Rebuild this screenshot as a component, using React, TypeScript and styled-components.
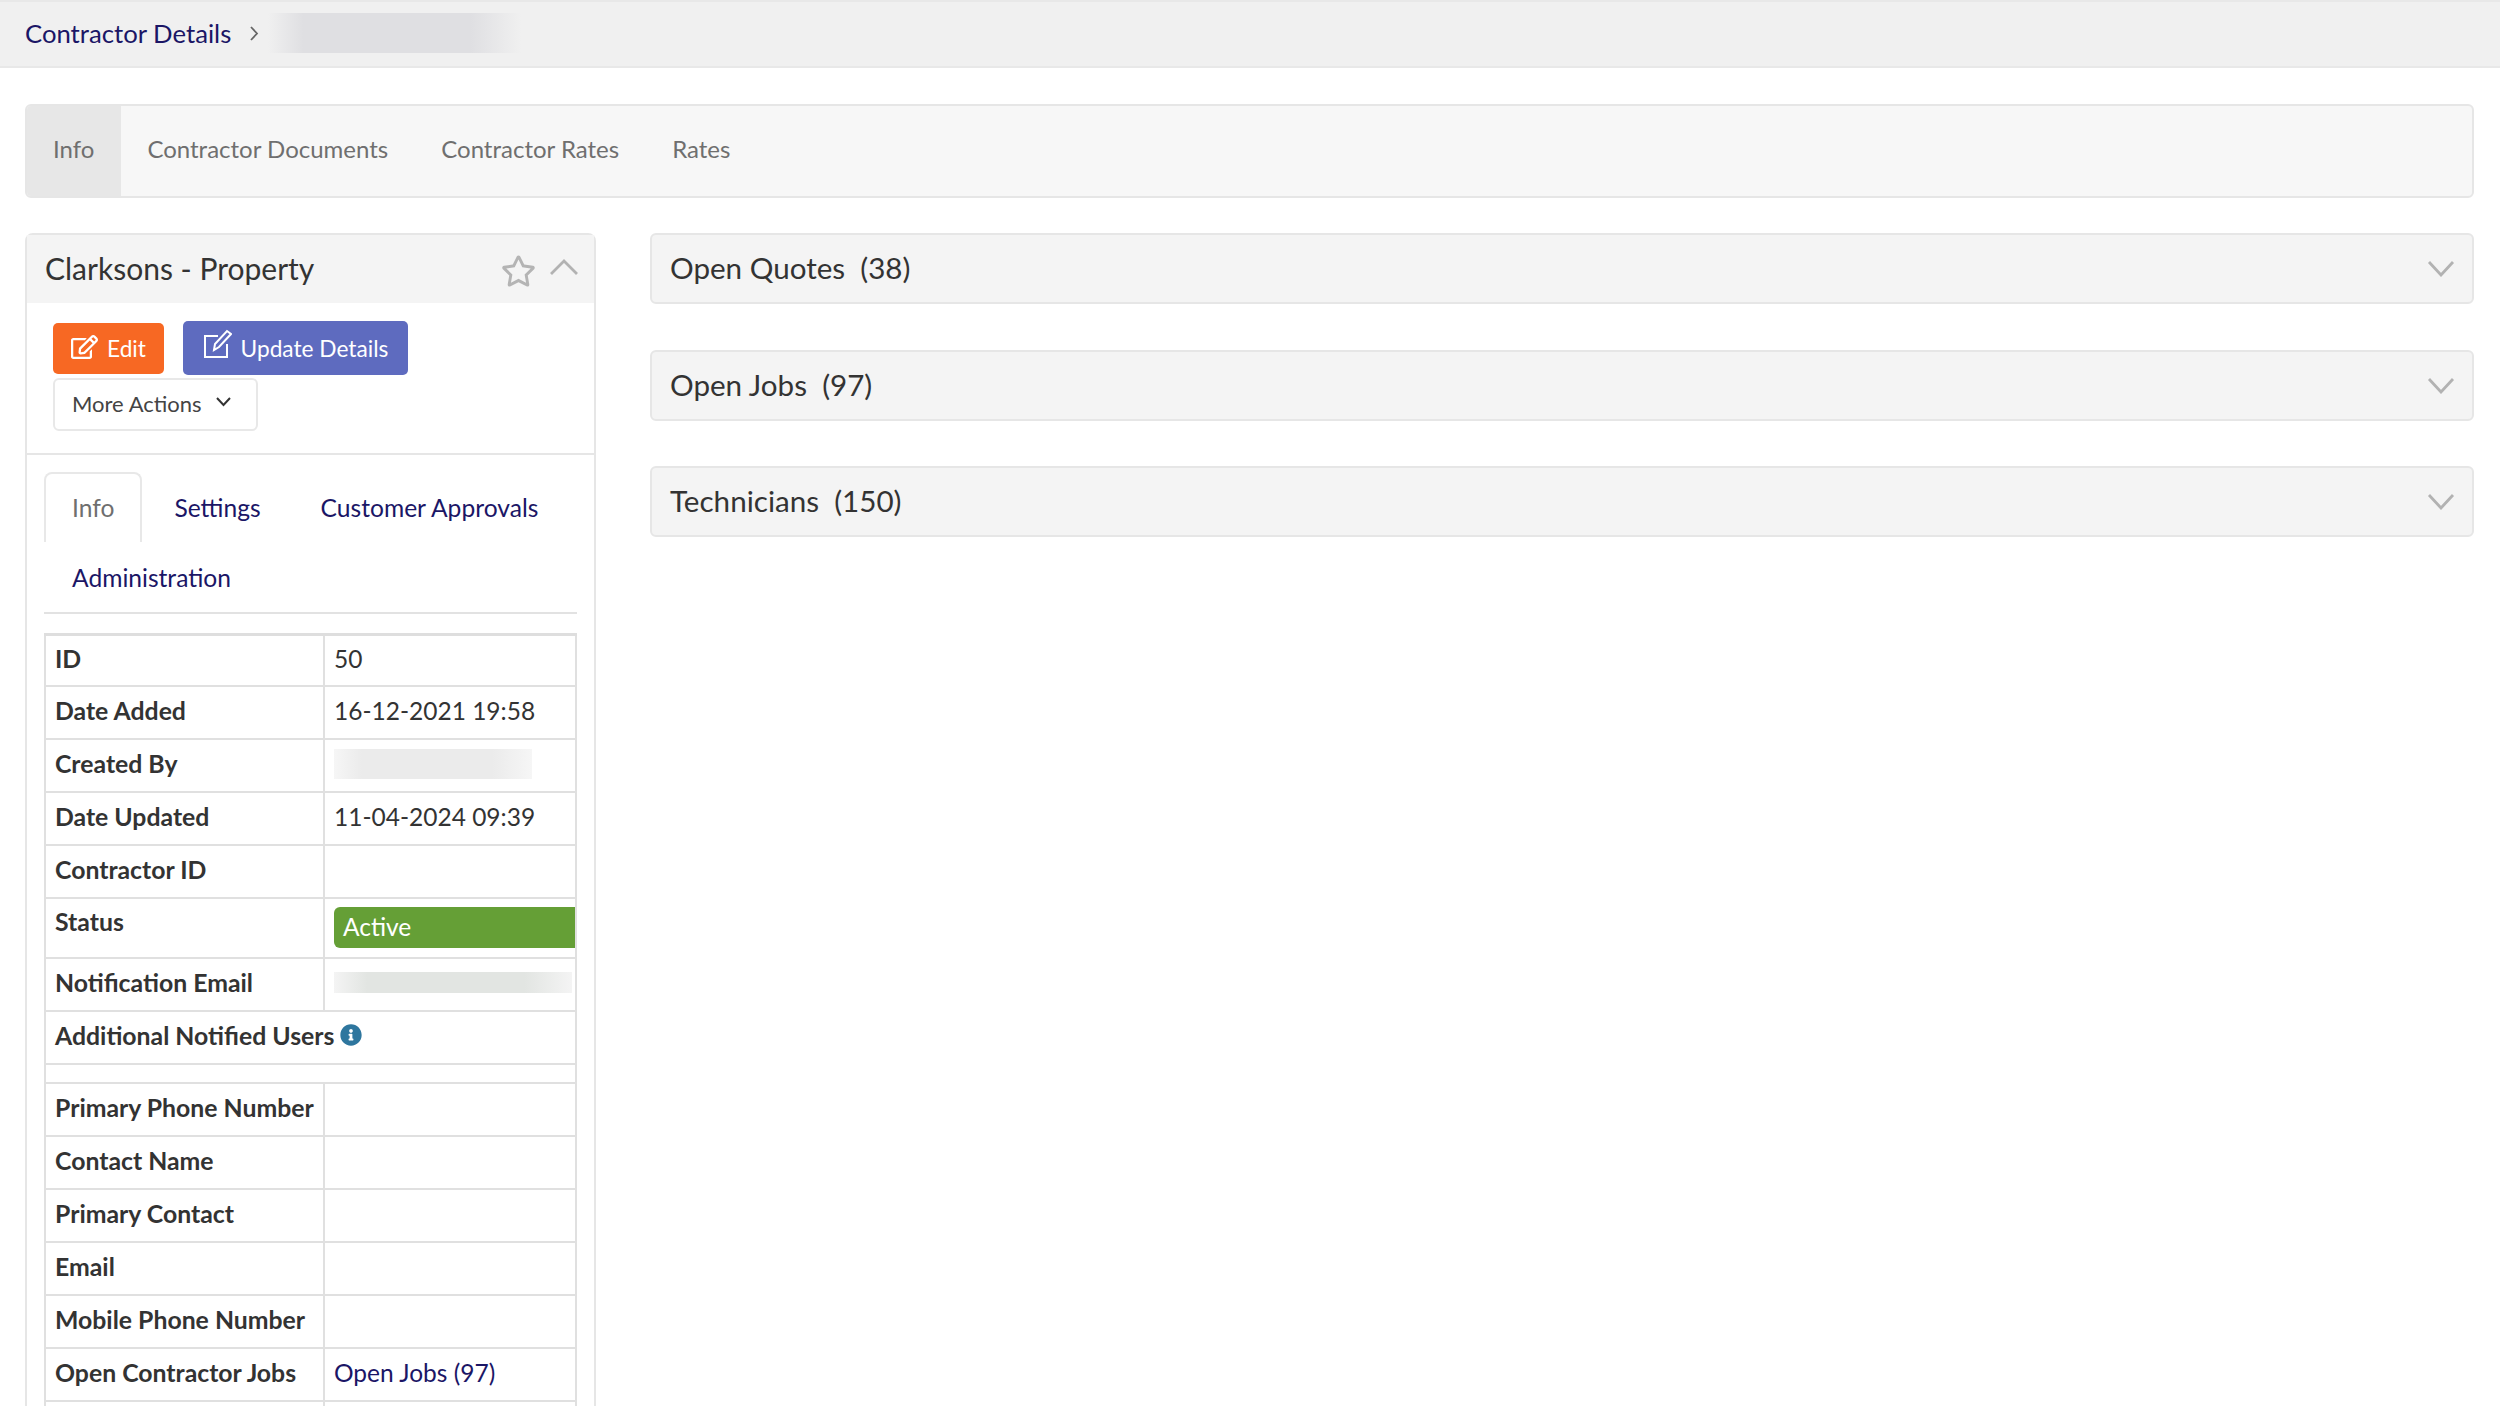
import React from 'react'
import styled, { createGlobalStyle } from 'styled-components'
import { FaRegEdit, FaRegStar, FaInfoCircle } from 'react-icons/fa'

const GlobalStyle = createGlobalStyle`
    html, body {
        margin: 0;
        padding: 0;
        background: #fff;
        color: #333;
        font-family: Lato, "Open Sans", sans-serif;
        font-size: 24px;
    }
    * {
        box-sizing: border-box;
    }
`

const Screen = styled.div`
    height: 1406px;
    overflow: hidden;
`

const Breadcrumbs = styled.div`
    display: flex;
    align-items: center;
    height: 68px;
    padding: 0 0 2px 25px;
    background: #f0f0f0;
    border-top: 2px solid #e8e8e8;
    border-bottom: 2px solid #e8e8e8;
    font-size: 25.7px;
`

const NavyLink = styled.a`
    color: #1b1666;
    text-decoration: none;
    cursor: pointer;
`

const CrumbSeparator = styled.svg`
    width: 10px;
    height: 15px;
    margin: 0 9px 0 18px;
    fill: none;
    stroke: #666;
    stroke-width: 1.8;
`

const Blurred = styled.div<{ $w: number; $h: number; $tone: string; $edge: string }>`
    width: ${(p) => p.$w}px;
    height: ${(p) => p.$h}px;
    background: linear-gradient(90deg, ${(p) => p.$edge}, ${(p) => p.$tone} 14%, ${(p) => p.$tone} 80%, ${(p) => p.$edge});
`

const Page = styled.div`
    padding: 36px 26px 0 25px;
`

const TopNav = styled.nav`
    display: flex;
    height: 94px;
    background: #f7f7f7;
    border: 2px solid #e6e6e6;
    border-radius: 6px;
    overflow: hidden;
    margin-bottom: 35px;
`

const TopNavItem = styled.a<{ $active?: boolean }>`
    display: flex;
    align-items: center;
    padding: 0 27px 5px 26px;
    color: #6f6f6f;
    background: ${(p) => (p.$active ? '#e7e7e7' : 'transparent')};
    cursor: pointer;
`

const Columns = styled.div`
    display: grid;
    grid-template-columns: 571px 1fr;
    column-gap: 54px;
    align-items: start;
`

const Card = styled.section`
    border: 2px solid #e6e6e6;
    border-bottom: 0;
    border-radius: 8px 8px 0 0;
`

const CardHeader = styled.header`
    display: flex;
    align-items: center;
    height: 68px;
    padding: 0 16px 2px 18px;
    background: #f4f4f4;
    font-size: 30px;
`

const HeaderTitle = styled.div`
    flex: 1;
`

const Star = styled(FaRegStar)`
    width: 35px;
    height: 32px;
    color: #b4b4b4;
    margin: 6px 14px 0 0;
`

const Chevron = styled.svg`
    width: 28px;
    height: 16px;
    fill: none;
    stroke: #b2b2b2;
    stroke-width: 2.8;
`

const CollapseChevron = styled(Chevron)`
    margin-top: -2px;
`

const ExpandChevron = styled(Chevron)`
    margin-top: 3px;
`

const Actions = styled.div`
    display: flex;
    flex-direction: column;
    gap: 3px;
    padding: 18px 0 22px 26px;
    border-bottom: 2px solid #e6e6e6;
`

const ActionRow = styled.div`
    display: flex;
    align-items: center;
    gap: 19px;
`

const ActionButton = styled.button<{ $bg: string; $w: number; $h: number }>`
    display: flex;
    align-items: center;
    justify-content: center;
    gap: 9px;
    width: ${(p) => p.$w}px;
    height: ${(p) => p.$h}px;
    padding: 0;
    background: ${(p) => p.$bg};
    color: #fff;
    border: 0;
    border-radius: 5px;
    font: inherit;
    font-size: 22.7px;
`

const EditIcon = styled(FaRegEdit)`
    width: 27px;
    height: 24px;
    margin-top: -2px;
`

const UpdateIcon = styled.svg`
    width: 29px;
    height: 30px;
    margin-top: -8px;
    fill: none;
    stroke: #fff;
    stroke-width: 2;
`

const MoreButton = styled.button`
    display: flex;
    align-items: center;
    gap: 14px;
    width: 205px;
    height: 53px;
    padding: 0 0 3px 17px;
    background: #fff;
    color: #444;
    border: 2px solid #e8e8e8;
    border-radius: 6px;
    font: inherit;
    font-size: 22px;
`

const SmallChevron = styled.svg`
    width: 15px;
    height: 10px;
    margin-top: -2px;
    fill: none;
    stroke: #333;
    stroke-width: 2;
`

const CardBody = styled.div`
    padding: 17px 17px 0 17px;
`

const Tabs = styled.div`
    display: flex;
    flex-wrap: wrap;
    column-gap: 4px;
    border-bottom: 2px solid #e2e2e2;
    margin-bottom: 19px;
`

const Tab = styled.a<{ $active?: boolean }>`
    display: flex;
    align-items: center;
    height: 70px;
    padding: 0 26px 2px;
    font-size: 24.6px;
    color: ${(p) => (p.$active ? '#6f6f6f' : '#1b1666')};
    border: 2px solid ${(p) => (p.$active ? '#e8e8e8' : 'transparent')};
    border-bottom: 0;
    border-radius: 8px 8px 0 0;
    cursor: pointer;
`

const BreakRow = styled.div`
    flex-basis: 100%;
    height: 0;
`

const InfoTable = styled.table`
    table-layout: fixed;
    width: 533px;
    border-collapse: collapse;
    border-top: 3px solid #dedede;
    font-size: 24.5px;
`

const Row = styled.tr<{ $h?: number }>`
    height: ${(p) => p.$h || 53}px;
`

const Label = styled.th`
    width: 279px;
    padding: 0 0 3px 9px;
    text-align: left;
    font-weight: 700;
    font-size: 24.8px;
    color: #333;
    white-space: nowrap;
    border: 2px solid #e0e0e0;
`

const TopLabel = styled(Label)`
    vertical-align: top;
    padding-top: 8px;
`

const Value = styled.td`
    padding: 0 0 3px 9px;
    border: 2px solid #e0e0e0;
    overflow: hidden;
    white-space: nowrap;
`

const BadgeValue = styled(Value)`
    padding: 8px 0 8px 9px;
`

const StatusBadge = styled.div`
    display: flex;
    align-items: center;
    width: 280px;
    height: 41px;
    padding: 0 0 2px 9px;
    background: #659f36;
    color: #fff;
    border-radius: 6px 0 0 6px;
`

const InfoDot = styled(FaInfoCircle)`
    width: 22px;
    height: 22px;
    margin-left: 6px;
    vertical-align: -1px;
    color: #2e769e;
`

const Accordions = styled.div`
    display: flex;
    flex-direction: column;
    gap: 45.5px;
`

const Accordion = styled.div`
    display: flex;
    align-items: center;
    justify-content: space-between;
    height: 71px;
    padding: 0 17px 2px 18px;
    background: #f4f4f4;
    border: 2px solid #e6e6e6;
    border-radius: 6px;
    font-size: 29.6px;
`

const rows = ['Primary Phone Number', 'Contact Name', 'Primary Contact', 'Email', 'Mobile Phone Number']

const accordions = ['Open Quotes\u00a0\u00a0(38)', 'Open Jobs\u00a0\u00a0(97)', 'Technicians\u00a0\u00a0(150)']

export default function App() {
    return (
        <Screen>
            <GlobalStyle />
            <Breadcrumbs>
                <NavyLink>Contractor Details</NavyLink>
                <CrumbSeparator viewBox="0 0 10 15">
                    <polyline points="2,1 8,7.5 2,14" />
                </CrumbSeparator>
                <Blurred $w={253} $h={40} $tone="#dfdfe2" $edge="#f0f0f0" />
            </Breadcrumbs>
            <Page>
                <TopNav>
                    <TopNavItem $active>Info</TopNavItem>
                    <TopNavItem>Contractor Documents</TopNavItem>
                    <TopNavItem>Contractor Rates</TopNavItem>
                    <TopNavItem>Rates</TopNavItem>
                </TopNav>
                <Columns>
                    <Card>
                        <CardHeader>
                            <HeaderTitle>Clarksons - Property</HeaderTitle>
                            <Star />
                            <CollapseChevron viewBox="0 0 28 16">
                                <polyline points="1,15 14,2 27,15" />
                            </CollapseChevron>
                        </CardHeader>
                        <Actions>
                            <ActionRow>
                                <ActionButton $bg="#f76823" $w={111} $h={51}>
                                    <EditIcon />
                                    Edit
                                </ActionButton>
                                <ActionButton $bg="#5e6bbf" $w={225} $h={54}>
                                    <UpdateIcon viewBox="0 0 29 30">
                                        <path d="M15 7H2v21h22V15" />
                                        <path d="M11 21l1-6L24 2l4 3-12 13z" />
                                    </UpdateIcon>
                                    Update Details
                                </ActionButton>
                            </ActionRow>
                            <div>
                                <MoreButton>
                                    More Actions
                                    <SmallChevron viewBox="0 0 15 10">
                                        <polyline points="1,1 7.5,8 14,1" />
                                    </SmallChevron>
                                </MoreButton>
                            </div>
                        </Actions>
                        <CardBody>
                            <Tabs>
                                <Tab $active>Info</Tab>
                                <Tab>Settings</Tab>
                                <Tab>Customer Approvals</Tab>
                                <BreakRow />
                                <Tab>Administration</Tab>
                            </Tabs>
                            <InfoTable>
                                <colgroup>
                                    <col width={279} />
                                    <col />
                                </colgroup>
                                <tbody>
                                    <Row $h={51}>
                                        <Label>ID</Label>
                                        <Value>50</Value>
                                    </Row>
                                    <Row>
                                        <Label>Date Added</Label>
                                        <Value>16-12-2021 19:58</Value>
                                    </Row>
                                    <Row>
                                        <Label>Created By</Label>
                                        <Value>
                                            <Blurred $w={198} $h={30} $tone="#ebebeb" $edge="#f6f6f6" />
                                        </Value>
                                    </Row>
                                    <Row>
                                        <Label>Date Updated</Label>
                                        <Value>11-04-2024 09:39</Value>
                                    </Row>
                                    <Row>
                                        <Label>Contractor ID</Label>
                                        <Value />
                                    </Row>
                                    <Row $h={60}>
                                        <TopLabel>Status</TopLabel>
                                        <BadgeValue>
                                            <StatusBadge>Active</StatusBadge>
                                        </BadgeValue>
                                    </Row>
                                    <Row>
                                        <Label>Notification Email</Label>
                                        <Value>
                                            <Blurred $w={238} $h={21} $tone="#e2e5e2" $edge="#f4f4f4" />
                                        </Value>
                                    </Row>
                                    <Row>
                                        <Label colSpan={2}>
                                            Additional Notified Users
                                            <InfoDot />
                                        </Label>
                                    </Row>
                                    <Row $h={19}>
                                        <Value colSpan={2} />
                                    </Row>
                                    {rows.map((label) => (
                                        <Row key={label}>
                                            <Label>{label}</Label>
                                            <Value />
                                        </Row>
                                    ))}
                                    <Row>
                                        <Label>Open Contractor Jobs</Label>
                                        <Value>
                                            <NavyLink>Open Jobs (97)</NavyLink>
                                        </Value>
                                    </Row>
                                    <Row>
                                        <Label />
                                        <Value />
                                    </Row>
                                </tbody>
                            </InfoTable>
                        </CardBody>
                    </Card>
                    <Accordions>
                        {accordions.map((title) => (
                            <Accordion key={title}>
                                {title}
                                <ExpandChevron viewBox="0 0 28 16">
                                    <polyline points="2,1 14,14 26,1" />
                                </ExpandChevron>
                            </Accordion>
                        ))}
                    </Accordions>
                </Columns>
            </Page>
        </Screen>
    )
}
